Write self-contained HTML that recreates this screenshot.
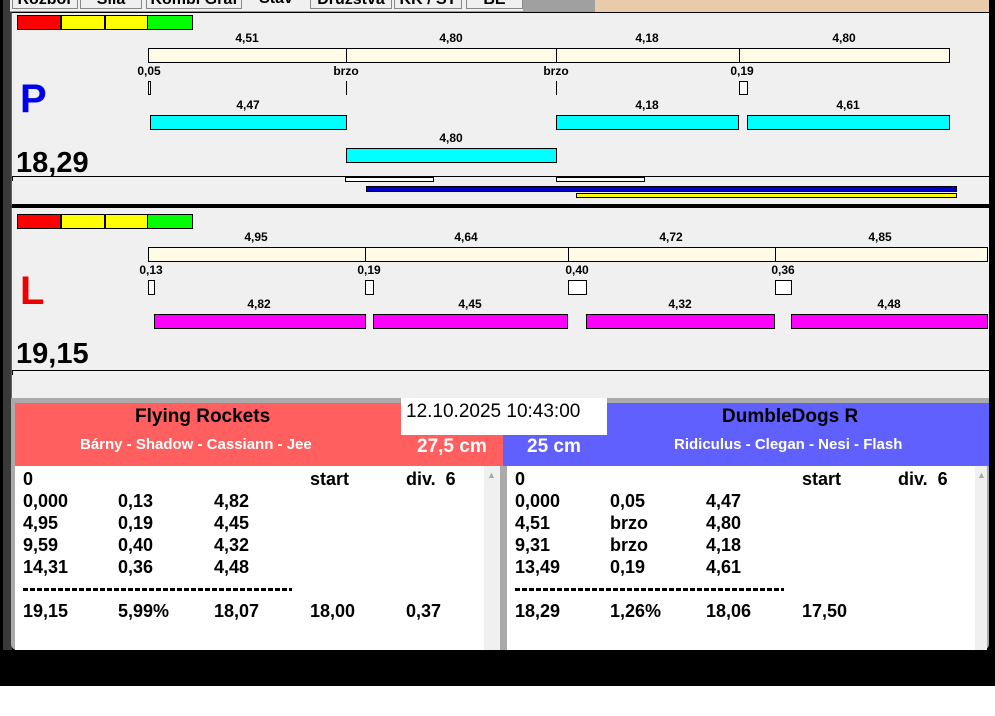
<!DOCTYPE html>
<html><head><meta charset="utf-8"><style>
*{margin:0;padding:0;box-sizing:border-box}
body{width:995px;height:716px;position:relative;background:#fff;overflow:hidden;font-family:"Liberation Sans",Arial,sans-serif;font-weight:bold;color:#000}
div,span{position:absolute}
.b{border:1px solid #000}
.cr{background:#fffbe6;border:1px solid #000}
.cy{background:#00ffff;border:1px solid #000}
.mg{background:#ff00ff;border:1px solid #000}
.l{font-size:12px;transform:translateX(-50%);white-space:nowrap;line-height:14px}
.t{font-size:18px;line-height:22px;white-space:nowrap}
.tab{top:-8px;height:17px;background:#f0f0f0;border:1px solid #888;font-size:16px;line-height:13px;text-align:center;overflow:hidden;white-space:nowrap}
.d{height:3px;width:269px;background:repeating-linear-gradient(90deg,#000 0 5px,transparent 5px 7px)}
</style></head><body>
<!-- frame -->
<div style="left:0;top:0;width:995px;height:686px;background:#000"></div>
<div style="left:3px;top:0;width:9px;height:650px;background:#3a3a3a"></div>
<div style="left:10px;top:0;width:585px;height:12px;background:#f0f0f0;border-bottom:1px solid #999;overflow:hidden">
<div class="tab" style="left:2px;width:66px">Rozbor</div>
<div class="tab" style="left:70px;width:62px">Síla</div>
<div class="tab" style="left:136px;width:96px">Kombi Graf</div>
<div class="tab" style="left:236px;width:60px;border:none">Stav</div>
<div class="tab" style="left:300px;width:82px">Družstva</div>
<div class="tab" style="left:384px;width:68px">KK / ST</div>
<div class="tab" style="left:456px;width:57px">BE</div>
<div style="left:513px;top:0;width:72px;height:12px;background:#a0a0a0"></div>
</div>
<div style="left:595px;top:0;width:394px;height:12px;background:#e8cba8"></div>
<!-- top panel -->
<div style="left:11px;top:12px;width:978px;height:193px;background:#f0f0f0;border-top:1px solid #000;border-left:1px solid #666"></div>
<div style="left:17px;top:15px;width:44px;height:15px;background:#f00" class="b"></div>
<div style="left:61px;top:15px;width:44px;height:15px;background:#ff0" class="b"></div>
<div style="left:105px;top:15px;width:43px;height:15px;background:#ff0" class="b"></div>
<div style="left:147px;top:15px;width:46px;height:15px;background:#0f0" class="b"></div>
<div class="cr" style="left:148px;top:48px;width:199px;height:15px"></div>
<div class="cr" style="left:346px;top:48px;width:211px;height:15px"></div>
<div class="cr" style="left:556px;top:48px;width:184px;height:15px"></div>
<div class="cr" style="left:739px;top:48px;width:211px;height:15px"></div>
<span class="l" style="left:247px;top:31px">4,51</span>
<span class="l" style="left:451px;top:31px">4,80</span>
<span class="l" style="left:647px;top:31px">4,18</span>
<span class="l" style="left:844px;top:31px">4,80</span>
<span class="l" style="left:149px;top:64px">0,05</span>
<span class="l" style="left:346px;top:64px">brzo</span>
<span class="l" style="left:556px;top:64px">brzo</span>
<span class="l" style="left:742px;top:64px">0,19</span>
<div class="b" style="left:148px;top:81px;width:3px;height:14px;background:#fff"></div>
<div style="left:346px;top:81px;width:1px;height:14px;background:#000"></div>
<div style="left:556px;top:81px;width:1px;height:14px;background:#000"></div>
<div class="b" style="left:739px;top:81px;width:9px;height:14px;background:#fff"></div>
<span class="l" style="left:248px;top:98px">4,47</span>
<span class="l" style="left:647px;top:98px">4,18</span>
<span class="l" style="left:848px;top:98px">4,61</span>
<div class="cy" style="left:150px;top:115px;width:197px;height:15px"></div>
<div class="cy" style="left:556px;top:115px;width:183px;height:15px"></div>
<div class="cy" style="left:747px;top:115px;width:203px;height:15px"></div>
<span class="l" style="left:451px;top:131px">4,80</span>
<div class="cy" style="left:346px;top:148px;width:211px;height:15px"></div>
<span style="left:20px;top:76px;font-size:40px;color:#0000ee;line-height:46px">P</span>
<span style="left:16px;top:146px;font-size:29px;line-height:34px">18,29</span>
<div style="left:12px;top:176px;width:977px;height:1px;background:#000"></div>
<div style="left:12px;top:176px;width:1px;height:5px;background:#000"></div>
<div class="b" style="left:345px;top:177px;width:89px;height:5px;background:#fff"></div>
<div class="b" style="left:556px;top:177px;width:89px;height:5px;background:#fff"></div>
<div class="b" style="left:366px;top:186px;width:591px;height:6px;background:#0000cc"></div>
<div class="b" style="left:576px;top:193px;width:381px;height:5px;background:#ff0"></div>
<div style="left:12px;top:204px;width:977px;height:4px;background:#000"></div>
<!-- lower panel -->
<div style="left:11px;top:208px;width:978px;height:192px;background:#f0f0f0;border-left:1px solid #666"></div>
<div style="left:17px;top:214px;width:44px;height:15px;background:#f00" class="b"></div>
<div style="left:61px;top:214px;width:44px;height:15px;background:#ff0" class="b"></div>
<div style="left:105px;top:214px;width:43px;height:15px;background:#ff0" class="b"></div>
<div style="left:147px;top:214px;width:46px;height:15px;background:#0f0" class="b"></div>
<div class="cr" style="left:148px;top:247px;width:218px;height:15px"></div>
<div class="cr" style="left:365px;top:247px;width:204px;height:15px"></div>
<div class="cr" style="left:568px;top:247px;width:208px;height:15px"></div>
<div class="cr" style="left:775px;top:247px;width:213px;height:15px"></div>
<span class="l" style="left:256px;top:230px">4,95</span>
<span class="l" style="left:466px;top:230px">4,64</span>
<span class="l" style="left:671px;top:230px">4,72</span>
<span class="l" style="left:880px;top:230px">4,85</span>
<span class="l" style="left:151px;top:263px">0,13</span>
<span class="l" style="left:369px;top:263px">0,19</span>
<span class="l" style="left:577px;top:263px">0,40</span>
<span class="l" style="left:783px;top:263px">0,36</span>
<div class="b" style="left:148px;top:280px;width:7px;height:15px;background:#fff"></div>
<div class="b" style="left:365px;top:280px;width:9px;height:15px;background:#fff"></div>
<div class="b" style="left:568px;top:280px;width:19px;height:15px;background:#fff"></div>
<div class="b" style="left:775px;top:280px;width:17px;height:15px;background:#fff"></div>
<span class="l" style="left:259px;top:297px">4,82</span>
<span class="l" style="left:470px;top:297px">4,45</span>
<span class="l" style="left:680px;top:297px">4,32</span>
<span class="l" style="left:889px;top:297px">4,48</span>
<div class="mg" style="left:154px;top:314px;width:212px;height:15px"></div>
<div class="mg" style="left:373px;top:314px;width:195px;height:15px"></div>
<div class="mg" style="left:586px;top:314px;width:189px;height:15px"></div>
<div class="mg" style="left:791px;top:314px;width:197px;height:15px"></div>
<span style="left:20px;top:268px;font-size:40px;color:#ee0000;line-height:46px">L</span>
<span style="left:16px;top:337px;font-size:29px;line-height:34px">19,15</span>
<div style="left:12px;top:370px;width:977px;height:1px;background:#000"></div>
<div style="left:12px;top:370px;width:1px;height:5px;background:#000"></div>
<!-- info -->
<div style="left:11px;top:398px;width:978px;height:252px;background:#aaa;border-radius:0 0 6px 6px"></div>
<div style="left:15px;top:403px;width:488px;height:63px;background:#ff5f5f"></div>
<div style="left:503px;top:403px;width:486px;height:63px;background:#6060ff"></div>
<span style="left:135px;top:406px;font-size:19px;line-height:22px">Flying Rockets</span>
<span style="left:80px;top:436px;font-size:15px;color:#fff;line-height:18px">Bárny - Shadow - Cassiann - Jee</span>
<span style="left:417px;top:436px;font-size:19px;color:#fff;line-height:22px">27,5 cm</span>
<span style="left:722px;top:406px;font-size:19px;line-height:22px">DumbleDogs R</span>
<span style="left:674px;top:436px;font-size:15px;color:#fff;line-height:18px">Ridiculus - Clegan - Nesi - Flash</span>
<span style="left:527px;top:436px;font-size:19px;color:#fff;line-height:22px">25 cm</span>
<div style="left:401px;top:398px;width:206px;height:37px;background:#fff"></div>
<span style="left:406px;top:401px;font-size:19px;font-weight:normal;line-height:22px">12.10.2025 10:43:00</span>
<div style="left:15px;top:466px;width:469px;height:184px;background:#fff"></div>
<div style="left:484px;top:466px;width:16px;height:184px;background:#f0f0f0"></div>
<div style="left:507px;top:466px;width:468px;height:184px;background:#fff"></div>
<div style="left:975px;top:466px;width:12px;height:184px;background:#f0f0f0"></div>
<span style="left:487px;top:470px;font-size:9px;color:#aaa">▲</span>
<span style="left:977px;top:470px;font-size:9px;color:#aaa">▲</span>
<!-- left table -->
<span class="t" style="left:23px;top:468px">0</span><span class="t" style="left:310px;top:468px">start</span><span class="t" style="left:406px;top:468px">div.&nbsp; 6</span>
<span class="t" style="left:23px;top:490px">0,000</span><span class="t" style="left:118px;top:490px">0,13</span><span class="t" style="left:214px;top:490px">4,82</span>
<span class="t" style="left:23px;top:512px">4,95</span><span class="t" style="left:118px;top:512px">0,19</span><span class="t" style="left:214px;top:512px">4,45</span>
<span class="t" style="left:23px;top:534px">9,59</span><span class="t" style="left:118px;top:534px">0,40</span><span class="t" style="left:214px;top:534px">4,32</span>
<span class="t" style="left:23px;top:556px">14,31</span><span class="t" style="left:118px;top:556px">0,36</span><span class="t" style="left:214px;top:556px">4,48</span>
<div class="d" style="left:23px;top:588px"></div>
<span class="t" style="left:23px;top:600px">19,15</span><span class="t" style="left:118px;top:600px">5,99%</span><span class="t" style="left:214px;top:600px">18,07</span><span class="t" style="left:310px;top:600px">18,00</span><span class="t" style="left:406px;top:600px">0,37</span>
<!-- right table -->
<span class="t" style="left:515px;top:468px">0</span><span class="t" style="left:802px;top:468px">start</span><span class="t" style="left:898px;top:468px">div.&nbsp; 6</span>
<span class="t" style="left:515px;top:490px">0,000</span><span class="t" style="left:610px;top:490px">0,05</span><span class="t" style="left:706px;top:490px">4,47</span>
<span class="t" style="left:515px;top:512px">4,51</span><span class="t" style="left:610px;top:512px">brzo</span><span class="t" style="left:706px;top:512px">4,80</span>
<span class="t" style="left:515px;top:534px">9,31</span><span class="t" style="left:610px;top:534px">brzo</span><span class="t" style="left:706px;top:534px">4,18</span>
<span class="t" style="left:515px;top:556px">13,49</span><span class="t" style="left:610px;top:556px">0,19</span><span class="t" style="left:706px;top:556px">4,61</span>
<div class="d" style="left:515px;top:588px"></div>
<span class="t" style="left:515px;top:600px">18,29</span><span class="t" style="left:610px;top:600px">1,26%</span><span class="t" style="left:706px;top:600px">18,06</span><span class="t" style="left:802px;top:600px">17,50</span>
</body></html>
